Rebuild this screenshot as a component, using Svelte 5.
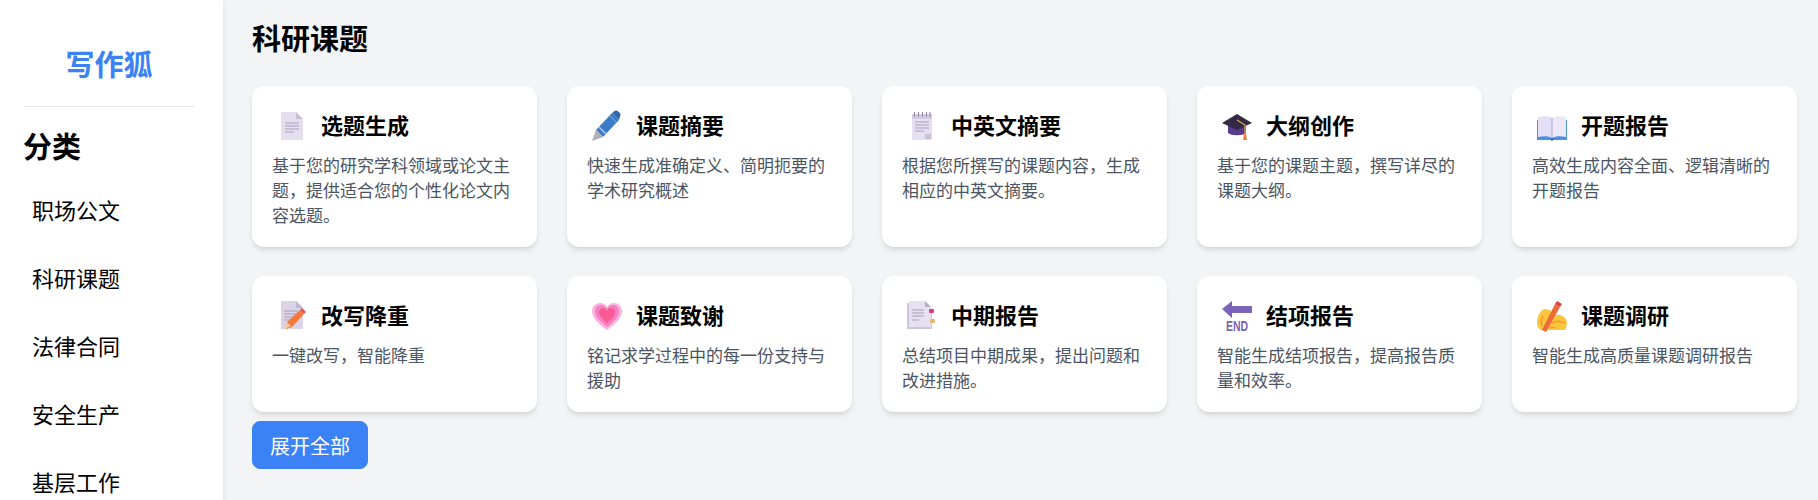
<script>
	const categories = ["职场公文", "科研课题", "法律合同", "安全生产", "基层工作"];

	const cards = [
		{icon: "doc", title: "选题生成", desc: "基于您的研究学科领域或论文主题，提供适合您的个性化论文内容选题。"},
		{icon: "pen", title: "课题摘要", desc: "快速生成准确定义、简明扼要的学术研究概述"},
		{icon: "notepad", title: "中英文摘要", desc: "根据您所撰写的课题内容，生成相应的中英文摘要。"},
		{icon: "cap", title: "大纲创作", desc: "基于您的课题主题，撰写详尽的课题大纲。"},
		{icon: "book", title: "开题报告", desc: "高效生成内容全面、逻辑清晰的开题报告"},
		{icon: "rewrite", title: "改写降重", desc: "一键改写，智能降重"},
		{icon: "heart", title: "课题致谢", desc: "铭记求学过程中的每一份支持与援助"},
		{icon: "midterm", title: "中期报告", desc: "总结项目中期成果，提出问题和改进措施。"},
		{icon: "end", title: "结项报告", desc: "智能生成结项报告，提高报告质量和效率。"},
		{icon: "hand", title: "课题调研", desc: "智能生成高质量课题调研报告"},
	];
</script>

<div class="page">
	<aside class="sidebar">
		<div class="logo">写作狐</div>
		<h2>分类</h2>
		<ul>
			{#each categories as name}
				<li>{name}</li>
			{/each}
		</ul>
	</aside>
	<main>
		<h1>科研课题</h1>
		<div class="grid">
			{#each cards as card}
				<div class="card">
					<div class="card-head">
						<svg class="icon" viewBox="0 0 40 40" width="40" height="40">
							{#if card.icon === "doc"}
								<path d="M9 6h15l7 7v21H9z" fill="#e5deef"/>
								<path d="M24 6l7 7h-7z" fill="#c6bfd6"/>
								<path d="M13 17h14M13 20h14M13 23h14M13 26h9" stroke="#a99fbf" stroke-width="1.2"/>
							{:else if card.icon === "pen"}
								<path d="M9 24L25 7l7 7-16 17z" fill="#3b7cc8"/>
								<path d="M25 7l2.500-2c1-1 3-.5 4.500 1s2 3 1 4.500L32 14z" fill="#2f68ad"/>
								<path d="M12 21l7 7" stroke="#a9c8ea" stroke-width="1.500"/>
								<path d="M23 10l7 7" stroke="#7fb0e3" stroke-width="1"/>
								<path d="M9 24l7 7-11 4z" fill="#b3adb8"/>
							{:else if card.icon === "notepad"}
								<rect x="10" y="8" width="20" height="26" fill="#e6dff0"/>
								<path d="M10 8h20v5H10z" fill="#d4cde2"/>
								<path d="M12.500 6v5M16.500 6v5M20.500 6v5M24.500 6v5M28 6v5" stroke="#8f86a8" stroke-width="1.100"/>
								<path d="M13 16h14M13 19h14M13 22h14M13 25h9" stroke="#a99fbf" stroke-width="1.200"/>
								<path d="M23 33v-5h6v5z" fill="#c9c0d9"/>
							{:else if card.icon === "cap"}
								<path d="M11 18v9c3 3 15 3 18 0v-9z" fill="#5a3a8c"/>
								<path d="M20 8L5 17l15 7 15-7z" fill="#352a45"/>
								<path d="M20 14l8 5v9" fill="none" stroke="#d9a441" stroke-width="1.300"/>
								<path d="M27 27h2l1 7h-4z" fill="#f08048"/>
							{:else if card.icon === "book"}
								<path d="M5 14h30v20H5z" fill="#4a92e0"/>
								<path d="M6 11c5-1 11-1 14 1v20c-3-2-9-2-14-1z" fill="#e4dff6"/>
								<path d="M34 11c-5-1-11-1-14 1v20c3-2 9-2 14-1z" fill="#ece8f9"/>
								<path d="M20 12v20" stroke="#aca6cb" stroke-width="1"/>
								<circle cx="20" cy="33.500" r="1.200" fill="#2868b0"/>
							{:else if card.icon === "rewrite"}
								<path d="M9 5h15l7 7v21H9z" fill="#dcd3e6"/>
								<path d="M24 5l7 7h-7z" fill="#bfb6cf"/>
								<path d="M12 15h14M12 18h14M12 21h10M12 24h6" stroke="#a79db8" stroke-width="1.200"/>
								<path d="M15 26l13-12 4 4-12 13-6 2z" fill="#f47b3a"/>
								<path d="M28 14l2-2 4 4-2 2z" fill="#e2574c"/>
								<path d="M15 26l4 4-5.500 2.500z" fill="#f7c89a"/>
							{:else if card.icon === "heart"}
								<path d="M20 34C10 27 5 21 5 15c0-5 4-8 8-8 3 0 5.500 1.500 7 4 1.500-2.500 4-4 7-4 4 0 8 3 8 8 0 6-5 12-15 19z" fill="#fbb4dc"/>
								<path d="M20 31c-8-6-12-11-12-16 0-4 3-6 6-6 2.500 0 4.500 1.500 6 4 1.500-2.500 3.500-4 6-4 3 0 6 2 6 6 0 5-4 10-12 16z" fill="#f780c4"/>
								<path d="M20 27c-5-4-8-8-8-11 0-2.500 2-4 4-4s3 1 4 3c1-2 2-3 4-3s4 1.500 4 4c0 3-3 7-8 11z" fill="#f95a92"/>
							{:else if card.icon === "midterm"}
								<path d="M5 7h19l6 6v20H5z" fill="#cdc5dc"/>
								<path d="M7 5h16l6 6v20H7z" fill="#e6e0f0"/>
								<path d="M23 5l6 6h-6z" fill="#b8b0c6"/>
								<path d="M10 14h12M10 17h12M10 20h12M10 24h7" stroke="#a79db8" stroke-width="1.200"/>
								<rect x="27" y="13" width="5" height="4" rx="1" fill="#d93f86"/>
								<rect x="28" y="23" width="5" height="4" rx="1" fill="#e9b870"/>
							{:else if card.icon === "end"}
								<path d="M5 13l10-8v5h20v7H15v5z" fill="#7b63ba"/>
								<text class="end" x="9" y="34.500" textLength="22" lengthAdjust="spacingAndGlyphs">END</text>
							{:else if card.icon === "hand"}
								<path d="M5 27c0-5 2-11 7-14l6 1 4 5c4-1 9 0 11 3 3 3 2 9 0 12H9c-3-1-4-4-4-7z" fill="#fbc63f"/>
								<path d="M11 20c-2 3-2 7-1 10" stroke="#f4a028" stroke-width="2" fill="none"/>
								<path d="M10 34L23 8l5 3-14 25z" fill="#ee6a3a"/>
								<path d="M23 8l2-3 5 3-2 3z" fill="#d9433a"/>
								<path d="M20 27c4-2 9-2 13 0M18 31c2 1 3 1 5 0" stroke="#f4a028" stroke-width="1.500" fill="none"/>
							{/if}
						</svg>
						<h3>{card.title}</h3>
					</div>
					<p>{card.desc}</p>
				</div>
			{/each}
		</div>
		<button>展开全部</button>
	</main>
</div>

<style>
	:global(body) {
		margin: 0;
		background-color: #f3f4f6;
		font-family: "Noto Sans CJK SC", "Noto Sans", sans-serif;
	}

	.page {
		display: flex;
		height: 500px;
		overflow: hidden;
	}

	.sidebar {
		width: 223px;
		flex-shrink: 0;
		box-sizing: border-box;
		padding: 0 29px 0 24px;
		background-color: #fff;
		box-shadow: 0 4px 6px rgba(0, 0, 0, 0.1);
	}
	.logo {
		height: 107px;
		padding-top: 42px;
		box-sizing: border-box;
		line-height: 42px;
		text-align: center;
		font-size: 29px;
		font-weight: 700;
		color: #3b82f6;
		border-bottom: 1px solid #e5e7eb;
	}
	.sidebar h2 {
		margin: 17px 0 0 -1px;
		font-size: 29px;
		line-height: 42px;
		font-weight: 700;
		color: #000;
	}
	.sidebar ul {
		list-style: none;
		margin: 10px 0 0;
		padding: 0;
	}
	.sidebar li {
		padding: 17px 8px 18px;
		font-size: 22px;
		line-height: 33px;
		color: #000;
	}

	main {
		flex: 1;
		padding: 15px 22px 0 29px;
	}
	h1 {
		margin: 0 0 27px;
		font-size: 29px;
		line-height: 44px;
		font-weight: 700;
		color: #000;
	}

	.grid {
		display: grid;
		grid-template-columns: repeat(5, 285px);
		gap: 29px 30px;
	}
	.card {
		box-sizing: border-box;
		padding: 20px 20px 20px;
		background-color: #fff;
		border-radius: 12px;
		box-shadow: 0 4px 6px -1px rgba(0, 0, 0, 0.1), 0 2px 4px -2px rgba(0, 0, 0, 0.1);
	}
	.card-head {
		display: flex;
		align-items: center;
		gap: 9px;
		height: 40px;
		margin-bottom: 6px;
	}
	.icon {
		flex-shrink: 0;
	}
	.end {
		font-family: "Liberation Sans", sans-serif;
		font-size: 14px;
		font-weight: 700;
		fill: #7b63ba;
	}
	h3 {
		margin: 0 0 4px;
		font-size: 22px;
		line-height: 33px;
		font-weight: 700;
		color: #000;
	}
	p {
		margin: 0;
		font-size: 17px;
		line-height: 25px;
		color: #4b5563;
	}

	button {
		display: block;
		width: 116px;
		height: 48px;
		margin-top: 9px;
		padding: 0;
		font-family: inherit;
		font-size: 20px;
		color: #fff;
		background-color: #3b82f6;
		border: 1px solid #3b82f6;
		border-radius: 8px;
	}
</style>
